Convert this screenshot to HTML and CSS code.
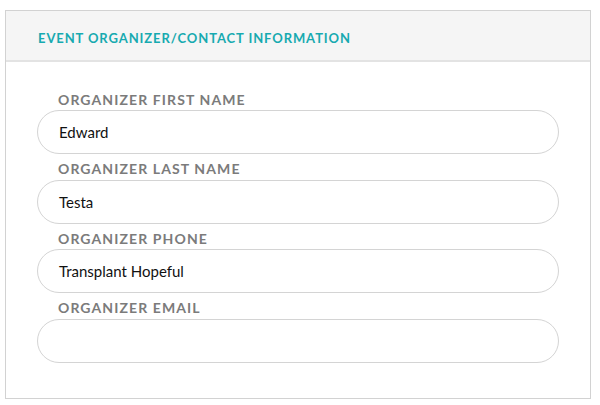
FILE: index.html
```html
<!DOCTYPE html>
<html>
<head>
<meta charset="utf-8">
<link rel="stylesheet" href="styles.css">
</head>
<body>
<section class="panel">
  <header class="panel-head">
    <h2 class="panel-title">EVENT ORGANIZER/CONTACT INFORMATION</h2>
  </header>
  <div class="panel-body">
    <div class="field">
      <label class="field-label">ORGANIZER FIRST NAME</label>
      <div class="field-input">Edward</div>
    </div>
    <div class="field">
      <label class="field-label">ORGANIZER LAST NAME</label>
      <div class="field-input">Testa</div>
    </div>
    <div class="field">
      <label class="field-label">ORGANIZER PHONE</label>
      <div class="field-input">Transplant Hopeful</div>
    </div>
    <div class="field">
      <label class="field-label">ORGANIZER EMAIL</label>
      <div class="field-input"></div>
    </div>
  </div>
</section>
</body>
</html>
```
FILE: styles.css
```css
html, body {
  margin: 0;
  padding: 0;
  background: #ffffff;
  font-family: "Lato", "Open Sans", sans-serif;
}
body {
  padding: 10px 9px 0 5px;
}
.panel {
  border: 1px solid #d2d2d2;
  width: 584px;
  box-sizing: content-box;
}
.panel-head {
  background: #f5f5f5;
  border-bottom: 2px solid #e3e3e3;
  height: 51px;
  box-sizing: border-box;
  display: flex;
  align-items: center;
  padding-left: 32px;
}
.panel-title {
  margin: 0;
  font-size: 13px;
  font-weight: 700;
  letter-spacing: 0.9px;
  color: #17aab0;
  padding-top: 4px;
}
.panel-body {
  padding: 26px 31px 35px 31px;
  display: flex;
  flex-direction: column;
  gap: 3.5px;
}
.field {
  display: flex;
  flex-direction: column;
}
.field-label {
  font-size: 14px;
  font-weight: 700;
  letter-spacing: 1.1px;
  color: #7b7b7b;
  line-height: 20px;
  padding-left: 21px;
  padding-top: 1.5px;
  margin-bottom: 0.5px;
}
.field-input {
  height: 44px;
  box-sizing: border-box;
  border: 1px solid #d4d4d4;
  border-radius: 22px;
  padding: 0 21px;
  display: flex;
  align-items: center;
  font-size: 15px;
  color: #111111;
}
```
